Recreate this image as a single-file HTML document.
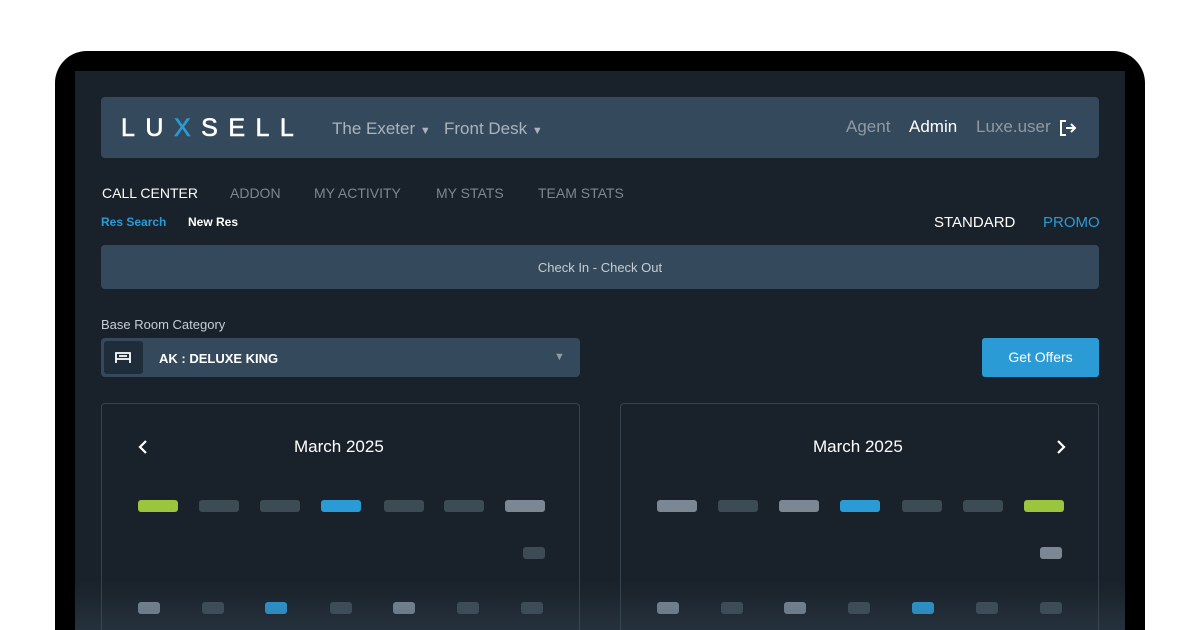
<!DOCTYPE html>
<html><head><style>
*{margin:0;padding:0;box-sizing:border-box}
html,body{width:1200px;height:630px;overflow:hidden}
body{background:#fff;position:relative;font-family:"Liberation Sans",sans-serif}
.frame{position:absolute;left:55px;top:51px;width:1090px;height:579px;background:#000;border-radius:32px 32px 0 0}
.screen{position:absolute;left:75px;top:71px;width:1050px;height:559px;background:#19212a;overflow:hidden}
.a{position:absolute}
.hdr{left:26px;top:26px;width:998px;height:61px;background:#344a5c;border-radius:4px}
.t{position:absolute;white-space:nowrap}
.bar{position:absolute;height:12px;border-radius:3px}
.g{background:#9bc53d}.b{background:#2b9bd6}.d{background:#3d4b55}.l{background:#7b8894}
.panel{position:absolute;top:332px;width:479px;height:228px;border:1px solid #36424d;border-bottom:none;border-radius:4px 4px 0 0}
</style></head><body>
<div class="frame"></div>
<div class="screen">
 <div class="a hdr">
  <div class="t" style="left:20px;top:17px;font-size:25px;letter-spacing:10.5px;color:#fff;-webkit-text-stroke:0.6px #fff">LU<span style="color:#2b9bd6;-webkit-text-stroke:0.6px #2b9bd6">X</span>SELL</div>
  <div class="t" style="left:231px;top:22px;font-size:17px;color:#a9b4bd">The Exeter <span style="font-size:11px">▼</span></div>
  <div class="t" style="left:343px;top:22px;font-size:17px;color:#a9b4bd">Front Desk <span style="font-size:11px">▼</span></div>
  <div class="t" style="left:745px;top:20px;font-size:17px;color:#8f9aa4">Agent</div>
  <div class="t" style="left:808px;top:20px;font-size:17px;color:#fff">Admin</div>
  <div class="t" style="left:875px;top:20px;font-size:17px;color:#8f9aa4">Luxe.user</div>
  <svg class="a" style="left:958px;top:22px" width="18" height="18" viewBox="0 0 18 18" fill="none" stroke="#fff" stroke-width="2"><path d="M7 2H2v14h5M7 9h9M12 5l4 4-4 4"/></svg>
 </div>
 <div class="t" style="left:27px;top:114px;font-size:14px;color:#fff">CALL CENTER</div>
 <div class="t" style="left:155px;top:114px;font-size:14px;color:#7c8791">ADDON</div>
 <div class="t" style="left:239px;top:114px;font-size:14px;color:#7c8791">MY ACTIVITY</div>
 <div class="t" style="left:361px;top:114px;font-size:14px;color:#7c8791">MY STATS</div>
 <div class="t" style="left:463px;top:114px;font-size:14px;color:#7c8791">TEAM STATS</div>
 <div class="t" style="left:26px;top:144px;font-size:12px;color:#2b9bd6;font-weight:bold">Res Search</div>
 <div class="t" style="left:113px;top:144px;font-size:12px;color:#fff;font-weight:bold">New Res</div>
 <div class="t" style="left:859px;top:143px;font-size:15px;color:#fff">STANDARD</div>
 <div class="t" style="left:968px;top:143px;font-size:15px;color:#2b9bd6">PROMO</div>
 <div class="a" style="left:26px;top:174px;width:998px;height:44px;background:#344a5c;border-radius:4px"><div class="t" style="width:100%;text-align:center;top:15px;font-size:13px;color:#c6cdd3">Check In - Check Out</div></div>
 <div class="t" style="left:26px;top:246px;font-size:13px;color:#c6cdd3">Base Room Category</div>
 <div class="a" style="left:26px;top:267px;width:479px;height:39px;background:#344a5c;border-radius:4px">
  <div class="a" style="left:3px;top:3px;width:39px;height:33px;background:#1f2d3a;border-radius:3px"></div>
  <svg class="a" style="left:13px;top:11px" width="18" height="16" viewBox="0 0 18 16" fill="none" stroke="#fff" stroke-width="1.8"><path d="M2 14V4h14v10M2 10h14M2 14v-4M5 7h8"/></svg>
  <div class="t" style="left:58px;top:13px;font-size:13px;color:#fff;font-weight:bold">AK : DELUXE KING</div>
  <div class="t" style="left:453px;top:13px;font-size:11px;color:#8f9aa4">▼</div>
 </div>
 <div class="a" style="left:907px;top:267px;width:117px;height:39px;background:#2b9bd6;border-radius:3px"><div class="t" style="width:100%;text-align:center;top:11px;font-size:14px;color:#fff">Get Offers</div></div>
 <div class="panel" style="left:26px"></div>
 <div class="panel" style="left:545px"></div>
 <svg class="a" style="left:62px;top:368px" width="12" height="16" viewBox="0 0 12 16" fill="none" stroke="#fff" stroke-width="2.2"><path d="M9 2L3 8l6 6"/></svg>
 <svg class="a" style="left:980px;top:368px" width="12" height="16" viewBox="0 0 12 16" fill="none" stroke="#fff" stroke-width="2.2"><path d="M3 2l6 6-6 6"/></svg>
 <div class="t" style="left:219px;top:366px;font-size:17px;color:#fff">March 2025</div>
 <div class="t" style="left:738px;top:366px;font-size:17px;color:#fff">March 2025</div>
 <div class="bar g" style="left:63px;top:429px;width:40px"></div>
 <div class="bar d" style="left:124px;top:429px;width:40px"></div>
 <div class="bar d" style="left:185px;top:429px;width:40px"></div>
 <div class="bar b" style="left:246px;top:429px;width:40px"></div>
 <div class="bar d" style="left:309px;top:429px;width:40px"></div>
 <div class="bar d" style="left:369px;top:429px;width:40px"></div>
 <div class="bar l" style="left:430px;top:429px;width:40px"></div>
 <div class="bar d" style="left:448px;top:476px;width:22px"></div>
 <div class="bar l" style="left:63px;top:531px;width:22px"></div>
 <div class="bar d" style="left:127px;top:531px;width:22px"></div>
 <div class="bar b" style="left:190px;top:531px;width:22px"></div>
 <div class="bar d" style="left:255px;top:531px;width:22px"></div>
 <div class="bar l" style="left:318px;top:531px;width:22px"></div>
 <div class="bar d" style="left:382px;top:531px;width:22px"></div>
 <div class="bar d" style="left:446px;top:531px;width:22px"></div>
 <div class="bar l" style="left:582px;top:429px;width:40px"></div>
 <div class="bar d" style="left:643px;top:429px;width:40px"></div>
 <div class="bar l" style="left:704px;top:429px;width:40px"></div>
 <div class="bar b" style="left:765px;top:429px;width:40px"></div>
 <div class="bar d" style="left:827px;top:429px;width:40px"></div>
 <div class="bar d" style="left:888px;top:429px;width:40px"></div>
 <div class="bar g" style="left:949px;top:429px;width:40px"></div>
 <div class="bar l" style="left:965px;top:476px;width:22px"></div>
 <div class="bar l" style="left:582px;top:531px;width:22px"></div>
 <div class="bar d" style="left:646px;top:531px;width:22px"></div>
 <div class="bar l" style="left:709px;top:531px;width:22px"></div>
 <div class="bar d" style="left:773px;top:531px;width:22px"></div>
 <div class="bar b" style="left:837px;top:531px;width:22px"></div>
 <div class="bar d" style="left:901px;top:531px;width:22px"></div>
 <div class="bar d" style="left:965px;top:531px;width:22px"></div>
 <div class="a" style="left:0;top:510px;width:1050px;height:49px;background:linear-gradient(rgba(60,80,95,0),rgba(60,80,95,0.35))"></div>
</div>
</body></html>
